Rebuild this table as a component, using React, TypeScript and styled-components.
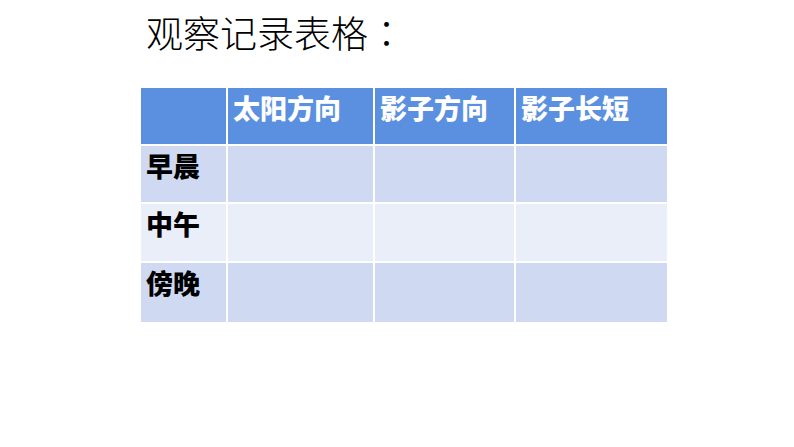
import React from "react";
import styled, { createGlobalStyle } from "styled-components";

const GlobalStyle = createGlobalStyle`
  html, body {
    margin: 0;
    padding: 0;
    background: #ffffff;
  }
  body {
    font-family: "Noto Sans CJK SC", "Noto Sans", sans-serif;
  }
`;

const Slide = styled.div`
  width: 794px;
  height: 447px;
  background: #ffffff;
  padding: 10px 0 0 141px;
  box-sizing: border-box;
`;

const Title = styled.h1`
  margin: 0 0 0 5px;
  font-size: 37px;
  font-weight: 300;
  line-height: 44px;
  color: #000000;
`;

// centred full-width colon, as in the slide font
const Colon = styled.span`
  font-family: "Noto Sans CJK TC", "Noto Sans CJK SC", sans-serif;
`;

const Grid = styled.div`
  margin-top: 34px;
  display: grid;
  grid-template-columns: 85px 145px 139px 151px;
  grid-template-rows: 56px 56px 57px 59px;
  gap: 2px;
  width: 526px;
`;

const Cell = styled.div<{ $tone: "head" | "dark" | "light" }>`
  padding: 3px 0 0 5px;
  font-size: 27px;
  font-weight: 900;
  line-height: 34px;
  color: ${(p) => (p.$tone === "head" ? "#ffffff" : "#000000")};
  background: ${(p) =>
    p.$tone === "head" ? "#5b8fe0" : p.$tone === "dark" ? "#cfdaf2" : "#e9eef8"};
`;

const headers = ["", "太阳方向", "影子方向", "影子长短"];
const rows = ["早晨", "中午", "傍晚"];

export default function App() {
  return (
    <Slide>
      <GlobalStyle />
      <Title>
        观察记录表格<Colon>：</Colon>
      </Title>
      <Grid>
        {headers.map((h, i) => (
          <Cell key={"h" + i} $tone="head">
            {h}
          </Cell>
        ))}
        {rows.map((r, ri) => {
          const tone = ri % 2 === 0 ? "dark" : "light";
          return (
            <React.Fragment key={r}>
              <Cell $tone={tone}>{r}</Cell>
              <Cell $tone={tone} />
              <Cell $tone={tone} />
              <Cell $tone={tone} />
            </React.Fragment>
          );
        })}
      </Grid>
    </Slide>
  );
}
